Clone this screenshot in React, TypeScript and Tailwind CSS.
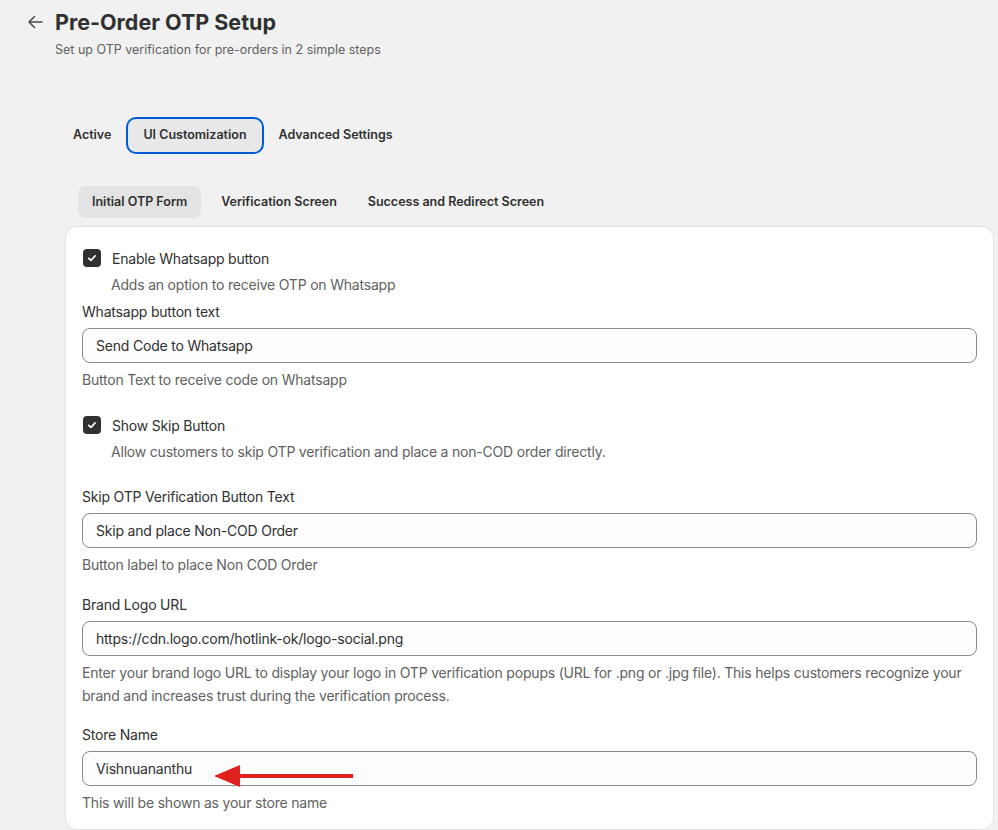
import React from "react";

const font = { fontFamily: "Inter, 'Noto Sans', sans-serif" };

function Check() {
  return (
    <span className="flex h-[18px] w-[18px] shrink-0 items-center justify-center rounded-[4px] bg-[#303030]">
      <svg width="12" height="12" viewBox="0 0 12 12" fill="none">
        <path d="M2.8 6.3 L5 8.4 L9.2 3.8" stroke="white" strokeWidth="1.7" strokeLinecap="round" strokeLinejoin="round" />
      </svg>
    </span>
  );
}

function Input({ value }: { value: string }) {
  return (
    <div className="mt-[6px] flex h-[35px] items-center rounded-[8px] border border-[#8a8a8a] bg-[#fdfdfd] px-[13px] text-[14px] tracking-[-0.2px] text-[#303030]">
      {value}
    </div>
  );
}

function Label({ text, mt }: { text: string; mt: string }) {
  return <div className={`${mt} h-[20px] text-[14px] leading-[20px] tracking-[-0.2px] text-[#303030]`}>{text}</div>;
}

function Help({ children }: { children: React.ReactNode }) {
  return <div className="mt-[5px] text-[14px] leading-[23px] tracking-[-0.2px] text-[#616161]">{children}</div>;
}

export default function App() {
  return (
    <div className="min-h-[830px] w-full overflow-hidden bg-[#f1f1f1]" style={font}>
      <div className="flex items-start pl-[27px] pt-[8px]">
        <svg width="17" height="28" viewBox="0 0 17 28" fill="none">
          <path d="M15 14 H2 M7.5 8.5 L2 14 L7.5 19.5" stroke="#4a4a4a" strokeWidth="1.5" strokeLinecap="round" strokeLinejoin="round" />
        </svg>
        <div className="ml-[11px]">
          <div className="text-[21.5px] font-bold leading-[28px] text-[#303030]">Pre-Order OTP Setup</div>
          <div className="mt-[4px] text-[12.5px] leading-[20px] text-[#616161]">
            Set up OTP verification for pre-orders in 2 simple steps
          </div>
        </div>
      </div>

      <div className="mt-[57px] flex h-[37px] items-center pl-[73px] text-[12.5px] font-semibold text-[#303030]">
        <span>Active</span>
        <span className="ml-[15px] flex h-[37px] items-center rounded-[10px] border-2 border-[#005bd3] bg-[#e8e8e8] px-[15px]">
          UI Customization
        </span>
        <span className="ml-[15px]">Advanced Settings</span>
      </div>

      <div className="mt-[32px] flex h-[32px] items-center pl-[78px] text-[12.5px] font-semibold text-[#303030]">
        <span className="flex h-[32px] items-center rounded-[8px] bg-[#e3e3e3] px-[14px]">Initial OTP Form</span>
        <span className="ml-[20px]">Verification Screen</span>
        <span className="ml-[31px]">Success and Redirect Screen</span>
      </div>

      <div className="ml-[65px] mr-[4px] mt-[8px] h-[604px] rounded-[12px] border border-[#e3e3e3] bg-white px-[16px] pt-[21px]">
        <div className="flex h-[20px] items-center gap-[11px] pl-[1px] text-[14px] tracking-[-0.2px] text-[#303030]">
          <Check />
          <span>Enable Whatsapp button</span>
        </div>
        <div className="mt-[7px] pl-[29px] text-[14px] leading-[20px] tracking-[-0.2px] text-[#616161]">
          Adds an option to receive OTP on Whatsapp
        </div>
        <Label text="Whatsapp button text" mt="mt-[7px]" />
        <Input value="Send Code to Whatsapp" />
        <Help>Button Text to receive code on Whatsapp</Help>

        <div className="mt-[24px] flex h-[20px] items-center gap-[11px] pl-[1px] text-[14px] tracking-[-0.2px] text-[#303030]">
          <Check />
          <span>Show Skip Button</span>
        </div>
        <div className="mt-[7px] pl-[29px] text-[14px] leading-[20px] tracking-[-0.2px] text-[#616161]">
          Allow customers to skip OTP verification and place a non-COD order directly.
        </div>
        <Label text="Skip OTP Verification Button Text" mt="mt-[25px]" />
        <Input value="Skip and place Non-COD Order" />
        <Help>Button label to place Non COD Order</Help>

        <Label text="Brand Logo URL" mt="mt-[19px]" />
        <Input value="https://cdn.logo.com/hotlink-ok/logo-social.png" />
        <Help>
          Enter your brand logo URL to display your logo in OTP verification popups (URL for .png or .jpg file). This helps customers recognize your brand and increases trust during the verification process.
        </Help>

        <Label text="Store Name" mt="mt-[18px]" />
        <div className="relative">
          <Input value="Vishnuananthu" />
          <svg className="absolute left-[132px] top-[13px]" width="140" height="24" viewBox="0 0 140 24" fill="none">
            <path d="M0 12 L26 1 L26 23 Z" fill="#e0211d" />
            <rect x="24" y="10" width="115" height="4" fill="#e0211d" />
          </svg>
        </div>
        <Help>This will be shown as your store name</Help>
      </div>
    </div>
  );
}
